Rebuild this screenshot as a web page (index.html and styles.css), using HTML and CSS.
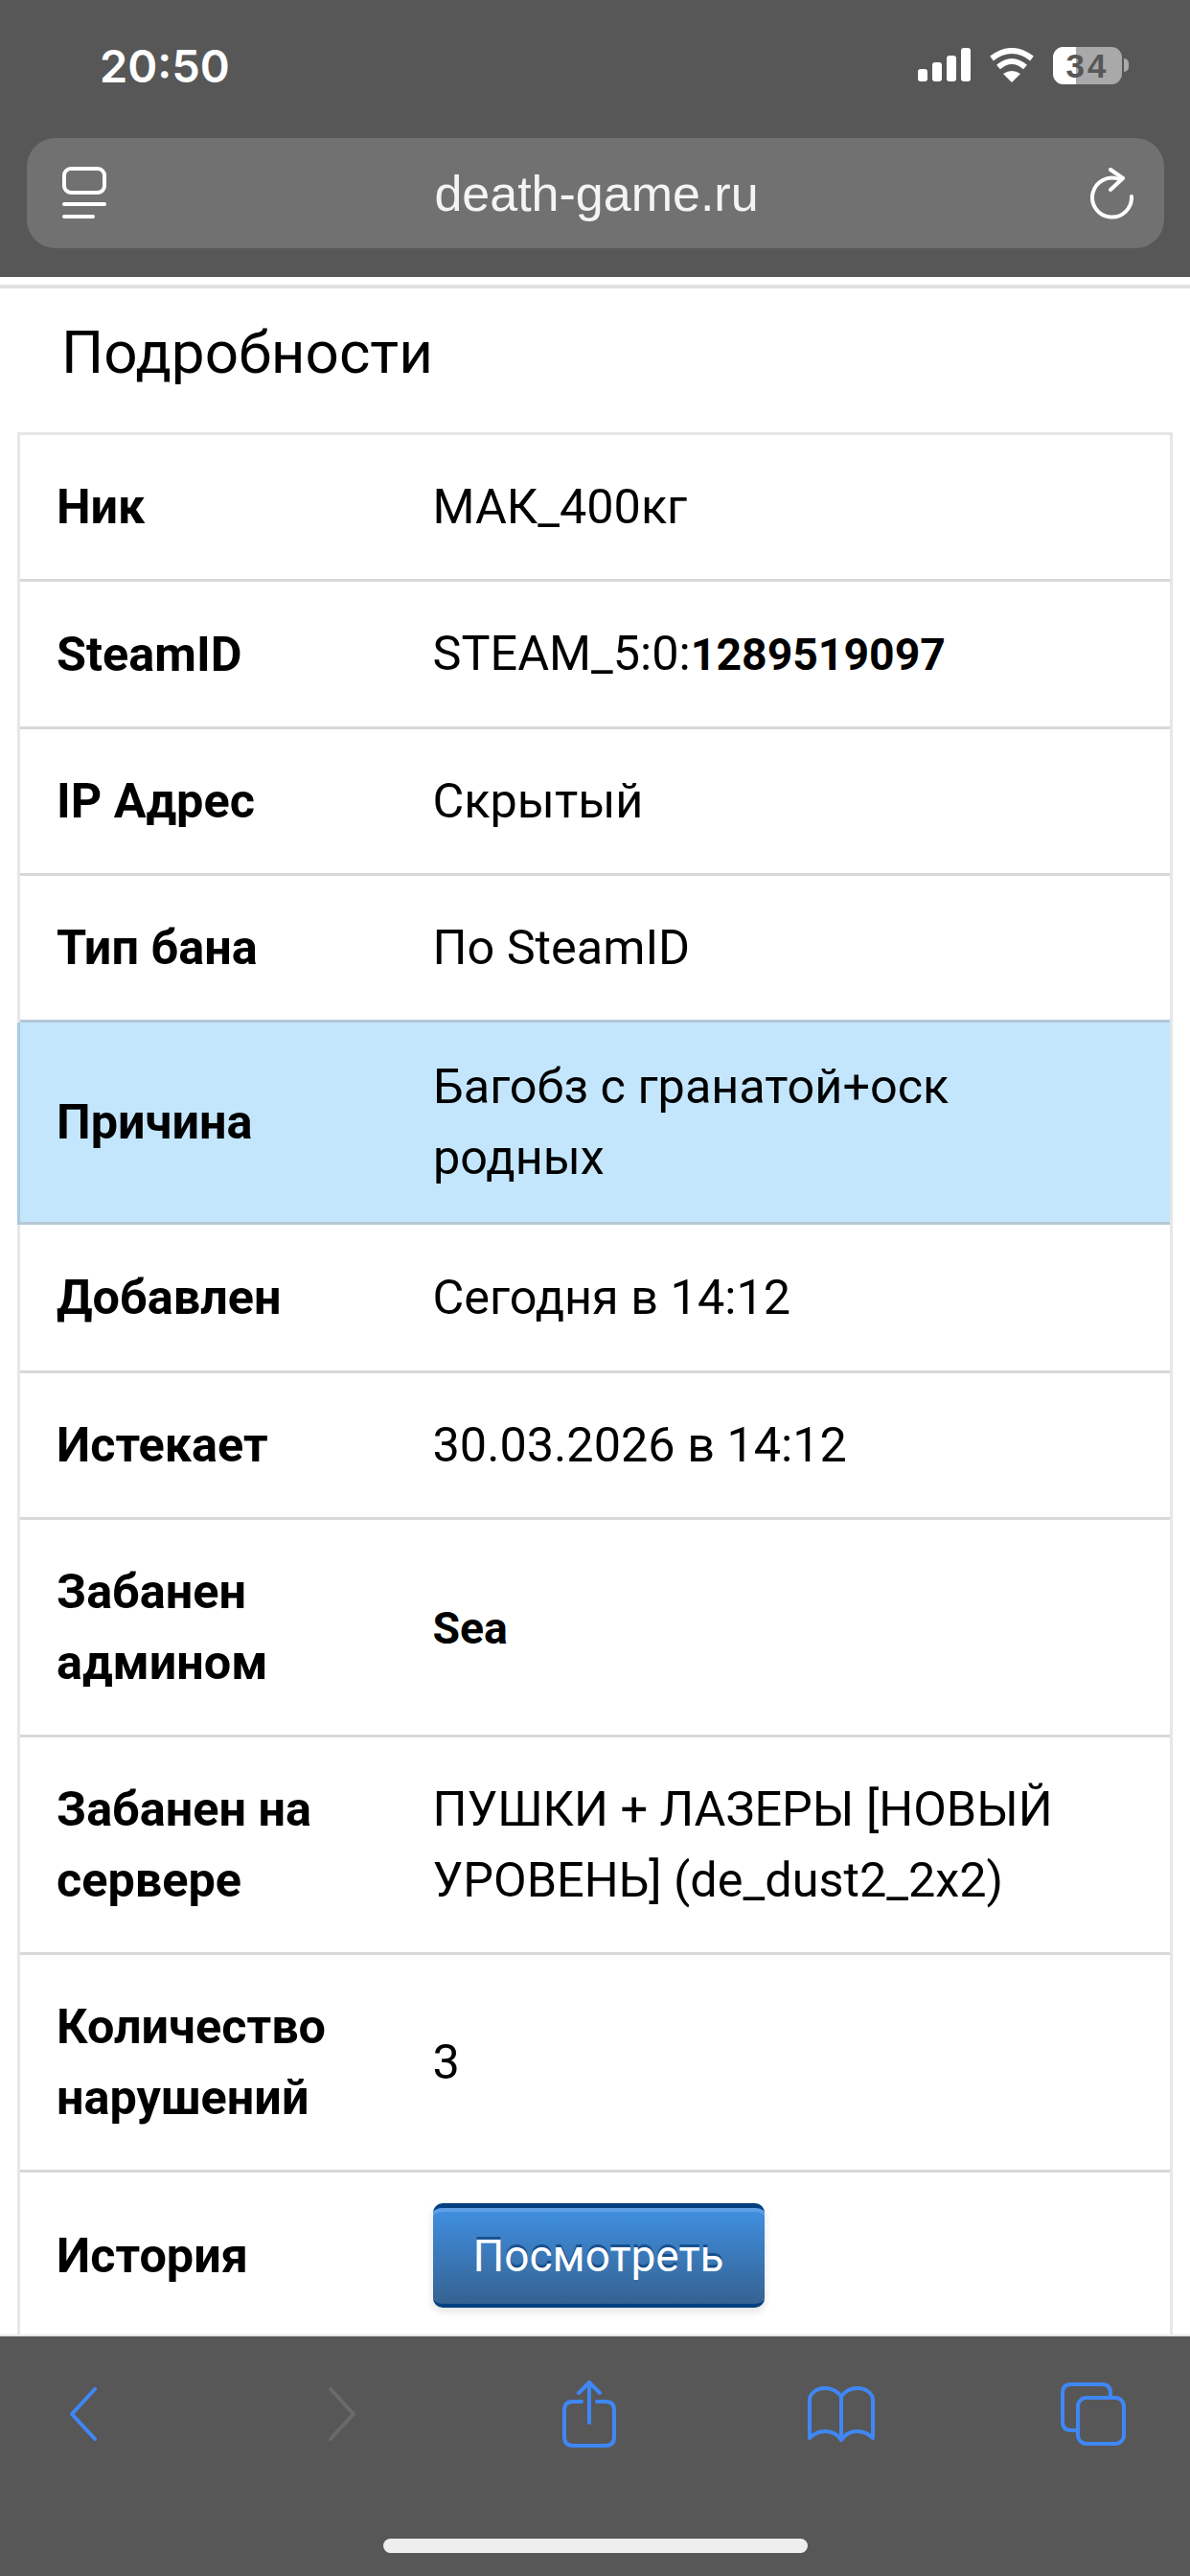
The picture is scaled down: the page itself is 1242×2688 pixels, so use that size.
FILE: index.html
```html
<!DOCTYPE html>
<html lang="en">
<head>
  <meta charset="UTF-8">
  <meta name="viewport" content="width=device-width, initial-scale=1.0">
  <title>Подробности</title>
  <link rel="stylesheet" href="styles.css">
</head>
<body>

<div class="phone">
  <header class="top-bar">
    <div class="status-row">
      <span class="clock">20:50</span>
      <div class="status-icons">
        <svg class="signal" width="56" height="36" viewBox="0 0 56 36" fill="#fff">
          <rect x="1" y="22" width="10" height="13" rx="3"/>
          <rect x="16" y="15" width="10" height="20" rx="3"/>
          <rect x="31" y="8" width="10" height="27" rx="3"/>
          <rect x="46" y="0" width="10" height="35" rx="3"/>
        </svg>
        <svg class="wifi" width="48" height="36" viewBox="0 0 48 36" fill="none" stroke="#fff" stroke-width="6">
          <path d="M3 11 Q24 -5 45 11"/>
          <path d="M10 20 Q24 8 38 20"/>
          <path d="M15 27 L24 36 L33 27 Q24 21 15 27Z" fill="#fff" stroke="none"/>
        </svg>
        <div class="battery">
          <div class="battery-body"><span class="battery-fill"></span><span class="battery-text">34</span></div>
          <span class="battery-nub"></span>
        </div>
      </div>
    </div>
    <div class="url-bar">
      <svg width="46" height="56" viewBox="0 0 46 56" fill="none" stroke="#fff" stroke-width="4" stroke-linecap="round">
        <rect x="2" y="2" width="42" height="25" rx="7"/>
        <path d="M2 39H44"/>
        <path d="M2 52H32"/>
      </svg>
      <span class="url-text">death-game.ru</span>
      <svg width="46" height="54" viewBox="0 0 46 54" fill="none" stroke="#fff" stroke-width="4" stroke-linecap="round" stroke-linejoin="round">
        <path d="M44 30 A20.5 20.5 0 1 1 31 12"/>
        <path d="M22 2 L35 11 L22 23"/>
      </svg>
    </div>
  </header>

  <main class="content">
    <h2 class="page-title">Подробности</h2>
    <table class="details">
      <tr><th>Ник</th><td>МАК_400кг</td></tr>
      <tr><th>SteamID</th><td>STEAM_5:0:<b>1289519097</b></td></tr>
      <tr><th>IP Адрес</th><td>Скрытый</td></tr>
      <tr><th>Тип бана</th><td>По SteamID</td></tr>
      <tr class="reason"><th>Причина</th><td>Багобз с гранатой+оск родных</td></tr>
      <tr class="after-reason"><th>Добавлен</th><td>Сегодня в 14:12</td></tr>
      <tr><th>Истекает</th><td>30.03.2026 в 14:12</td></tr>
      <tr><th>Забанен админом</th><td><b>Sea</b></td></tr>
      <tr><th>Забанен на сервере</th><td>ПУШКИ + ЛАЗЕРЫ [НОВЫЙ УРОВЕНЬ] (de_dust2_2x2)</td></tr>
      <tr><th>Количество нарушений</th><td>3</td></tr>
      <tr class="history"><th>История</th><td><button class="view-btn">Посмотреть</button></td></tr>
    </table>
  </main>

  <footer class="bottom-bar">
    <div class="toolbar">
      <svg width="30" height="56" viewBox="0 0 30 56" fill="none" stroke="#3f87f5" stroke-width="4" stroke-linecap="round" stroke-linejoin="round">
        <path d="M27 2 L3 28 L27 54"/>
      </svg>
      <svg width="30" height="56" viewBox="0 0 30 56" fill="none" stroke="#6a6a6a" stroke-width="4" stroke-linecap="round" stroke-linejoin="round">
        <path d="M3 2 L27 28 L3 54"/>
      </svg>
      <svg width="56" height="70" viewBox="0 0 56 70" fill="none" stroke="#3f87f5" stroke-width="4" stroke-linecap="round" stroke-linejoin="round">
        <path d="M20 22 H11 Q2 22 2 31 V59 Q2 68 11 68 H45 Q54 68 54 59 V31 Q54 22 45 22 H36"/>
        <path d="M28 44 V2"/>
        <path d="M17 13 L28 2 L39 13"/>
      </svg>
      <svg width="70" height="58" viewBox="0 0 70 58" fill="none" stroke="#3f87f5" stroke-width="4" stroke-linecap="round" stroke-linejoin="round">
        <path d="M35 11 C31 5 25 2 18 2 C9 2 2 8 2 14 V54 C7 49 12 47 18 47 C25 47 31 50 35 56 C39 50 45 47 52 47 C58 47 63 49 68 54 V14 C68 8 61 2 52 2 C45 2 39 5 35 11 Z"/>
        <path d="M35 11 V56"/>
      </svg>
      <svg width="68" height="66" viewBox="0 0 68 66" fill="none" stroke="#3f87f5" stroke-width="4" stroke-linecap="round" stroke-linejoin="round">
        <path d="M16 50 H11 Q2 50 2 41 V11 Q2 2 11 2 H43 Q52 2 52 11 V15"/>
        <rect x="18" y="16" width="48" height="48" rx="9"/>
      </svg>
    </div>
    <div class="home-bar"></div>
  </footer>
</div>

</body>
</html>
```

FILE: styles.css
```css
body {
  margin: 0;
  font-family: Roboto, "Liberation Sans", sans-serif;
  background-color: #fff;
}

.phone {
  width: 1242px;
  height: 2688px;
  display: flex;
  flex-direction: column;
  overflow: hidden;
}

/* top browser chrome */
.top-bar {
  height: 289px;
  flex-shrink: 0;
  box-sizing: border-box;
  padding: 48px 27px 0 28px;
  background-color: #575757;
  color: #fff;
}

.status-row {
  display: flex;
  justify-content: space-between;
  align-items: center;
  height: 40px;
  padding: 0 37px 0 76px;
}

.clock {
  font-family: "Inter", Roboto, sans-serif;
  font-size: 47px;
  font-weight: 600;
}

.status-icons {
  display: flex;
  align-items: center;
  gap: 19px;
}

.battery {
  display: flex;
  align-items: center;
  gap: 2px;
}

.battery-body {
  position: relative;
  width: 72px;
  height: 39px;
  border-radius: 11px;
  overflow: hidden;
  background-color: #a9a9a9;
  text-align: center;
}

.battery-fill {
  position: absolute;
  left: 0;
  top: 0;
  bottom: 0;
  width: 33%;
  background-color: #fff;
}

.battery-text {
  position: relative;
  font-family: "Liberation Sans", sans-serif;
  font-size: 35px;
  font-weight: 700;
  letter-spacing: 3px;
  line-height: 39px;
  color: #575757;
}

.battery-nub {
  width: 5px;
  height: 14px;
  border-radius: 0 5px 5px 0;
  background-color: #a9a9a9;
}

.url-bar {
  display: flex;
  justify-content: space-between;
  align-items: center;
  height: 115px;
  margin-top: 56px;
  padding: 0 32px 0 37px;
  border-radius: 30px;
  background-color: #717171;
}

.url-text {
  font-family: "Liberation Sans", Roboto, sans-serif;
  font-size: 52px;
  color: #f4f4f4;
  margin-right: 3px;
}

/* page */
.content {
  flex: 1;
  min-height: 0;
  overflow: hidden;
  border-top: 2px solid #fff;
  padding-top: 6px;
}

.page-title {
  margin: 0;
  height: 154px;
  box-sizing: border-box;
  padding: 0 0 0 64px;
  border-top: 4px solid #e2e2e2;
  font-size: 62px;
  font-weight: 400;
  line-height: 134px;
  color: #000;
}

.details {
  width: 1206px;
  margin: 0 18px;
  border-collapse: collapse;
  table-layout: fixed;
  font-size: 50.4px;
  line-height: 74px;
  color: #000;
}

.details th,
.details td {
  box-sizing: border-box;
  border-top: 3px solid #d8d8d8;
  text-align: left;
  padding: 38px 0;
}

.details tr:first-child th,
.details tr:first-child td {
  border-top-color: #e6e6e6;
}

.details th {
  width: 387px;
  padding-left: 38px;
  padding-right: 10px;
  font-weight: 700;
  border-left: 3px solid #e6e6e6;
}

.details td {
  padding-left: 45px;
  padding-right: 60px;
  border-right: 3px solid #e6e6e6;
}

.details b {
  font-size: 46.4px;
}

.reason th,
.reason td {
  padding-top: 30px;
  padding-bottom: 30px;
  background-color: #c4e6fd;
  border-top-color: #b2c9d9;
}

.reason th {
  border-left-color: #a9cbe2;
}

.reason td {
  border-left: 1px solid #cbe9fd;
}

.after-reason th,
.after-reason td {
  padding-top: 39px;
  padding-bottom: 39px;
  border-top-color: #b8c8d2;
}

.history th,
.history td {
  padding-top: 32px;
  padding-bottom: 29px;
}

.view-btn {
  display: block;
  width: 346px;
  height: 109px;
  padding: 0;
  border: none;
  border-top: 5px solid #04407f;
  border-bottom: 4px solid #04407f;
  border-radius: 10px;
  background: linear-gradient(#4090e2, #356291);
  box-shadow: inset 0 4px 0 #5f9fe6, 0 4px 8px rgba(0, 0, 0, 0.12);
  font-family: inherit;
  font-size: 46px;
  color: #fff;
  text-shadow: 0 -3px 0 rgba(0, 50, 110, 0.6);
}

/* bottom browser chrome */
.bottom-bar {
  height: 252px;
  flex-shrink: 0;
  border-top: 2px solid #e8e8e8;
  box-sizing: border-box;
  background-color: #575757;
}

.toolbar {
  display: grid;
  grid-template-columns: 270px 245px 256px 264px auto;
  align-items: center;
  height: 80px;
  padding: 41px 0 0 72px;
}

.home-bar {
  width: 443px;
  height: 15px;
  margin: 90px auto 0;
  border-radius: 8px;
  background-color: #eee;
}
```
